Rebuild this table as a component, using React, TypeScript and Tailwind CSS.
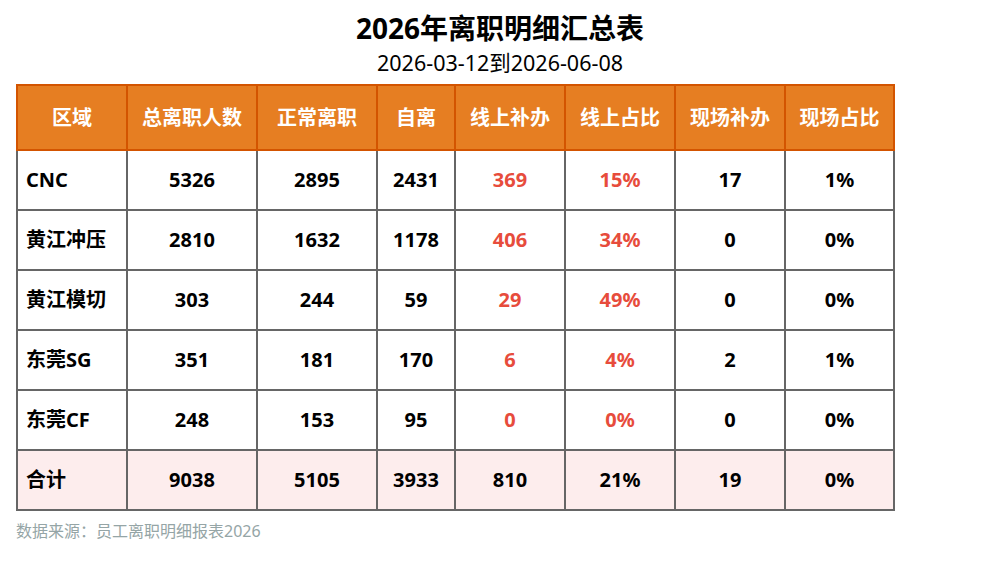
import React from "react";

const headers = ["区域", "总离职人数", "正常离职", "自离", "线上补办", "线上占比", "现场补办", "现场占比"];
const widths = [110, 130, 120, 78, 110, 110, 110, 109];

const rows: string[][] = [
  ["CNC", "5326", "2895", "2431", "369", "15%", "17", "1%"],
  ["黄江冲压", "2810", "1632", "1178", "406", "34%", "0", "0%"],
  ["黄江模切", "303", "244", "59", "29", "49%", "0", "0%"],
  ["东莞SG", "351", "181", "170", "6", "4%", "2", "1%"],
  ["东莞CF", "248", "153", "95", "0", "0%", "0", "0%"],
];
const total = ["合计", "9038", "5105", "3933", "810", "21%", "19", "0%"];

export default function App() {
  return (
    <div
      className="w-[1000px] h-[580px] bg-white text-black"
      style={{ fontFamily: '"Noto Sans", "Noto Sans CJK SC", sans-serif' }}
    >
      <div className="pt-[9px] text-center text-[28px] font-bold leading-[38px]">2026年离职明细汇总表</div>
      <div className="pt-[2px] text-center text-[21.5px] leading-[28px]">2026-03-12到2026-06-08</div>
      <div className="pl-[16px] pt-[7px]">
        <table className="table-fixed border-collapse w-[877px]">
          <colgroup>
            {widths.map((w, i) => (
              <col key={i} style={{ width: w }} />
            ))}
          </colgroup>
          <thead>
            <tr className="h-[65px] bg-[#e67e22]">
              {headers.map((h) => (
                <th
                  key={h}
                  className="border-2 border-[#d35400] text-white text-[20px] font-bold text-center p-0"
                >
                  {h}
                </th>
              ))}
            </tr>
          </thead>
          <tbody>
            {rows.map((r) => (
              <tr key={r[0]} className="h-[60px] bg-white">
                {r.map((c, i) => (
                  <td
                    key={i}
                    className={
                      "border-2 border-[#666666] text-[20px] font-bold p-0 " +
                      (i === 0 ? "text-left pl-[8px] " : "text-center ") +
                      (i === 4 || i === 5 ? "text-[#e74c3c]" : "text-black")
                    }
                  >
                    {c}
                  </td>
                ))}
              </tr>
            ))}
            <tr className="h-[60px] bg-[#fdeded]">
              {total.map((c, i) => (
                <td
                  key={i}
                  className={
                    "border-2 border-[#666666] text-[20px] font-bold p-0 text-black " +
                    (i === 0 ? "text-left pl-[8px]" : "text-center")
                  }
                >
                  {c}
                </td>
              ))}
            </tr>
          </tbody>
        </table>
        <div className="pt-[8px] text-[16px] text-[#95a5a6] leading-[24px]">数据来源：员工离职明细报表2026</div>
      </div>
    </div>
  );
}
